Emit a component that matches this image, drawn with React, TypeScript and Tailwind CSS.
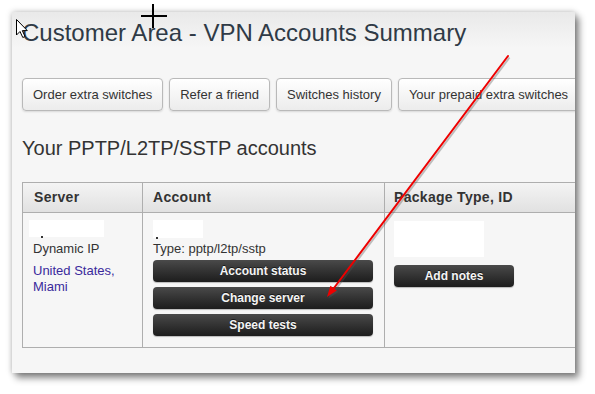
const TOP_BUTTONS = ['Order extra switches', 'Refer a friend', 'Switches history', 'Your prepaid extra switches'];

const ACCOUNT_ACTIONS = ['Account status', 'Change server', 'Speed tests'];

function DarkButton({ label, width }: { label: string; width: string }) {
  return (
    <div
      className={`${width} h-[22px] flex items-center justify-center rounded-[4px] bg-gradient-to-b from-[#4a4a4a] to-[#1d1d1d] text-[12px] font-bold text-[#f4f4f4] shadow-[0_1px_1px_rgba(0,0,0,0.25)] [text-shadow:0_-1px_0_rgba(0,0,0,0.6)]`}
    >
      {label}
    </div>
  );
}

// white redaction box with the stray period that peeks out below it
function Redacted({ w, h, dotLeft }: { w: string; h: string; dotLeft: string }) {
  return (
    <div className={`relative ${w} ${h} bg-white`}>
      <span className={`absolute ${dotLeft} -bottom-[1px] w-[2px] h-[2px] bg-[#333]`} />
    </div>
  );
}

export default function App() {
  return (
    <div className="relative w-[595px] h-[394px] bg-white overflow-hidden font-['Liberation_Sans',Arial,sans-serif] text-[#333]">
      <div className="ml-[12px] mt-[12px] w-[563px] h-[361px] overflow-hidden bg-[linear-gradient(#e9e9e9,#f6f6f6_36px)] shadow-[0_0_6px_rgba(0,0,0,0.25),4px_5px_7px_rgba(0,0,0,0.45)] pl-[10px]">
        <h1 className="pt-[7px] text-[24px] leading-[28px] text-[#2f3a46]">Customer Area - VPN Accounts Summary</h1>

        <div className="mt-[31px] flex gap-[6px] whitespace-nowrap">
          {TOP_BUTTONS.map((b) => (
            <div
              key={b}
              className="h-[33px] shrink-0 flex items-center px-[10px] rounded-[4px] border border-[#b9b9b9] bg-gradient-to-b from-white to-[#ececec] text-[13px] text-[#333] shadow-[0_1px_2px_rgba(0,0,0,0.12)]"
            >
              {b}
            </div>
          ))}
        </div>

        <h2 className="mt-[26px] text-[20px] leading-[22px] text-[#333]">Your PPTP/L2TP/SSTP accounts</h2>

        <div className="mt-[23px] w-[600px] border border-[#aeaeae]">
          <div className="grid grid-cols-[119px_242px_1fr] h-[30px] border-b border-[#aeaeae] bg-gradient-to-b from-[#f4f4f4] to-[#e1e1e1] text-[14px] font-bold leading-[16px] tracking-[0.3px]">
            <div className="pl-[11px] pt-[6px]">Server</div>
            <div className="pl-[10px] pt-[6px] border-l border-[#aeaeae]">Account</div>
            <div className="pl-[9px] pt-[6px] border-l border-[#aeaeae]">Package Type, ID</div>
          </div>

          <div className="grid grid-cols-[119px_242px_1fr] text-[13px]">
            <div className="pl-[6px] pt-[7px]">
              <Redacted w="w-[75px]" h="h-[17px]" dotLeft="left-[12px]" />
              <div className="pl-[4px] mt-[4px] leading-[15px]">Dynamic IP</div>
              <div className="pl-[4px] mt-[7px] leading-[16px] text-[#3a2a9c]">
                United States,
                <br />
                Miami
              </div>
            </div>

            <div className="pl-[10px] pt-[7px] pb-[11px] border-l border-[#aeaeae]">
              <Redacted w="w-[50px]" h="h-[18px]" dotLeft="left-[3px]" />
              <div className="mt-[3px] leading-[15px]">Type: pptp/l2tp/sstp</div>
              <div className="mt-[4px] flex flex-col gap-[5px]">
                {ACCOUNT_ACTIONS.map((a) => (
                  <DarkButton key={a} label={a} width="w-[220px]" />
                ))}
              </div>
            </div>

            <div className="pl-[9px] pt-[8px] border-l border-[#aeaeae]">
              <div className="w-[90px] h-[36px] bg-white" />
              <div className="mt-[8px]">
                <DarkButton label="Add notes" width="w-[120px]" />
              </div>
            </div>
          </div>
        </div>
      </div>

      {/* annotation overlay: red arrow and the two captured cursors */}
      <svg className="absolute inset-0 pointer-events-none" width="595" height="394" viewBox="0 0 595 394">
        <g opacity="0.35" transform="translate(1.5 1.5)">
          <line x1="508" y1="56" x2="331" y2="292" stroke="#555" strokeWidth="2" />
          <polygon points="327,297 336.8,290.6 330.4,285.8" fill="#555" />
        </g>
        <line x1="508" y1="56" x2="331" y2="292" stroke="#ee0000" strokeWidth="2" strokeLinecap="round" />
        <polygon points="327,297 336.8,290.6 330.4,285.8" fill="#ee0000" />

        <path
          d="M16.5 19.5 L16.5 35 L20 31.5 L22.8 37.5 L25 36.5 L22.3 30.6 L27.3 30.6 Z"
          fill="#fff"
          stroke="#000"
          strokeWidth="1"
          strokeLinejoin="miter"
        />

        <line x1="141" y1="16" x2="167" y2="16" stroke="#000" strokeWidth="2" />
        <line x1="153" y1="4" x2="153" y2="28" stroke="#000" strokeWidth="2" />
      </svg>
    </div>
  );
}
